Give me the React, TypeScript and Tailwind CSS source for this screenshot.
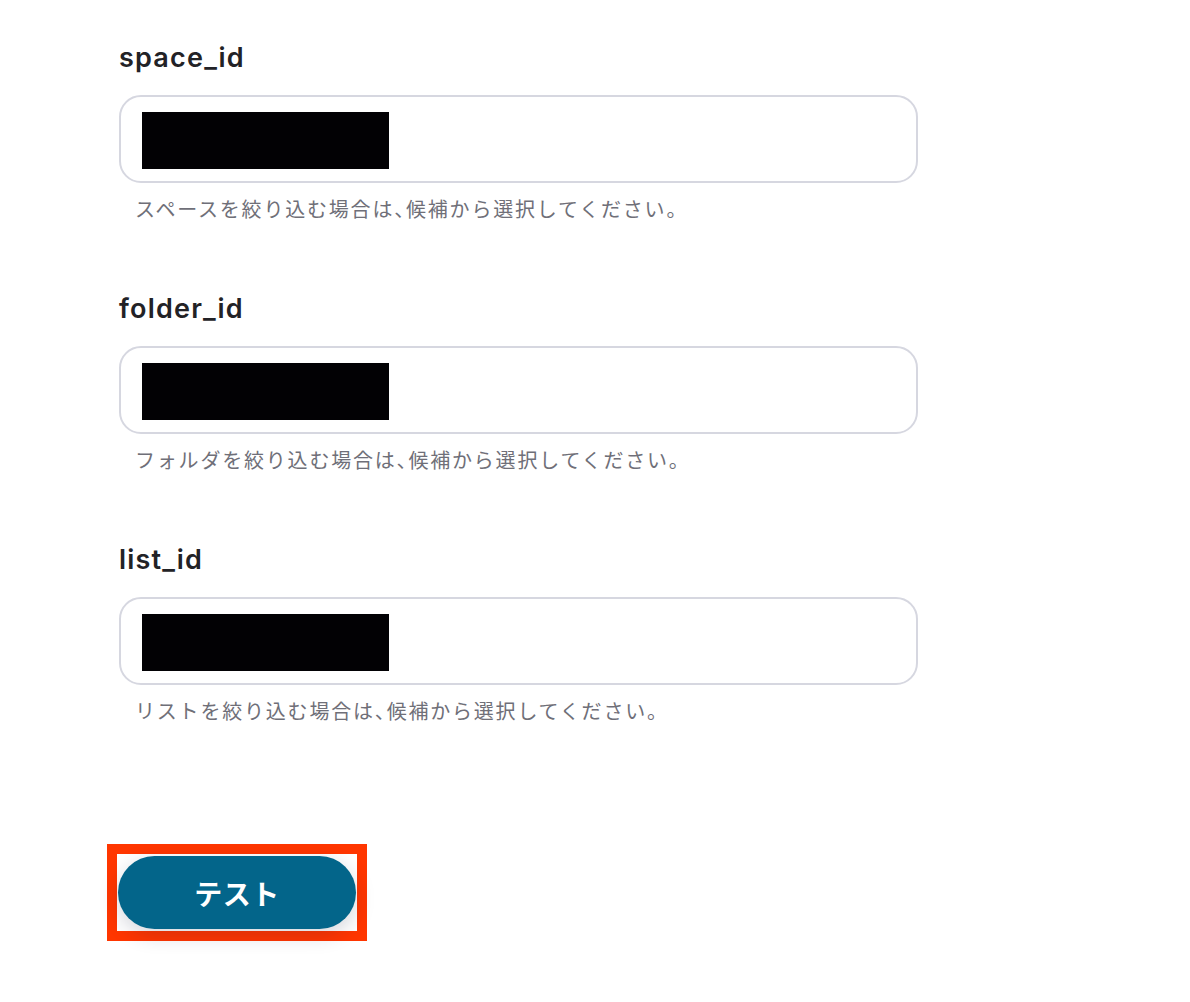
import React from 'react';

type Field = { name: string; hint: [string, string] };

const fields: Field[] = [
  { name: 'space_id', hint: ['スペースを絞り込む場合は', '候補から選択してください。'] },
  { name: 'folder_id', hint: ['フォルダを絞り込む場合は', '候補から選択してください。'] },
  { name: 'list_id', hint: ['リストを絞り込む場合は', '候補から選択してください。'] },
];

const jp = { fontFamily: '"Noto Sans CJK JP", "Noto Sans", sans-serif' };

function FieldBlock({ field }: { field: Field }) {
  return (
    <div className="mb-[70px]">
      <label
        className="block h-[32px] text-[27px] leading-[32px] font-semibold tracking-[1.2px] text-[#222226] mb-[21px]"
        style={{ fontFamily: 'Inter, "Noto Sans", sans-serif' }}
      >
        {field.name}
      </label>
      <div className="w-[799px] h-[88px] rounded-[22px] border-2 border-[#d6d7e0] bg-white pl-[21px] pt-[15px]">
        {/* masked value */}
        <div className="w-[247px] h-[57px] bg-[#020104]" />
      </div>
      <p className="mt-[12px] pl-[16px] text-[20px] leading-[28px] tracking-[1.8px] text-[#6f6f78]" style={jp}>
        {field.hint[0]}
        <span className="[font-feature-settings:'halt']">、</span>
        {field.hint[1]}
      </p>
    </div>
  );
}

export default function App() {
  return (
    <div className="w-[1190px] h-[1002px] bg-white overflow-hidden">
      <div className="pl-[119px] pt-[42px]">
        {fields.map((f) => (
          <FieldBlock key={f.name} field={f} />
        ))}
        <div className="mt-[49px] -ml-[12px] inline-block border-[10px] border-[#ff3600] px-px py-[2px]">
          <button
            className="w-[238px] h-[73px] rounded-full bg-[#03658a] text-white text-[28px] font-bold tracking-[0.5px] shadow-[0_6px_20px_rgba(20,30,60,0.18)]"
            style={jp}
          >
            テスト
          </button>
        </div>
      </div>
    </div>
  );
}
